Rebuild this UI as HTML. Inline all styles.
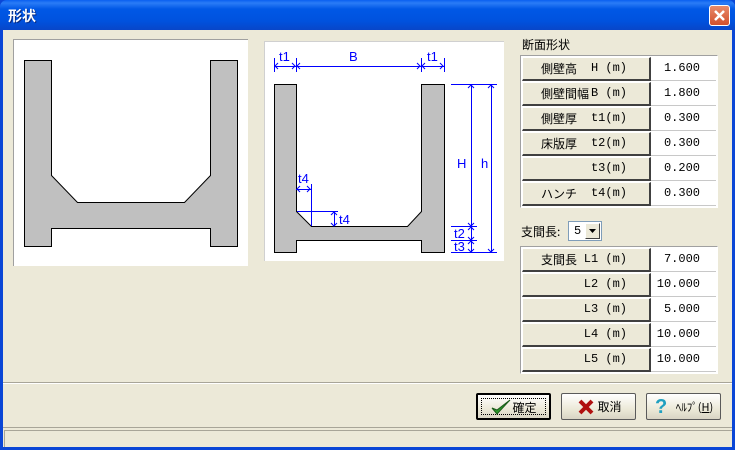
<!DOCTYPE html>
<html><head><meta charset="utf-8"><style>
*{margin:0;padding:0;box-sizing:border-box}
body{width:735px;height:450px;overflow:hidden;background:#0a46d6;font-family:"Liberation Mono","Noto Sans CJK JP",monospace;font-size:12px;color:#000;position:relative}
.abs{position:absolute}
#title{left:0;top:0;width:735px;height:30px;background:linear-gradient(#0a5ff0 0%,#2a7cf6 10%,#0058e6 30%,#0052de 70%,#0846c8 100%);border-radius:7px 7px 0 0}
#title span{position:absolute;left:8px;top:6px;color:#fff;font-weight:bold;font-size:14px;font-family:"Noto Sans CJK JP",sans-serif;text-shadow:1px 1px #0a2a80}
#close{left:709px;top:5px;width:21px;height:21px;background:linear-gradient(#e88a6a,#d2502c);border:1px solid #fff;border-radius:3px}
#body{left:3px;top:30px;width:729px;height:417px;background:#ece9d8}
.panel{background:#fff;border-top:1px solid #a0a0a0;border-left:1px solid #a0a0a0}
.cell{position:absolute;height:24px;line-height:21px;white-space:pre;overflow:hidden}
.lab{background:#ece9d8;border-top:1px solid #fff;border-left:1px solid #fff;border-right:2px solid #404040;border-bottom:2px solid #404040;font-size:12px}
.lab .a{position:absolute;left:18px;top:0;height:21px;line-height:21px;font-family:"Noto Sans CJK JP",sans-serif;font-size:12px}
.lab .b{position:absolute;right:22px;top:0;height:21px;line-height:21px;font-size:12px}
.val{background:#fff;text-align:right;padding-right:16px;border-bottom:1px solid #c8c8c8;font-size:12px;line-height:23px}
.tbl{background:#fff;border-top:1px solid #a0a0a0;border-left:1px solid #a0a0a0;border-right:1px solid #fff;border-bottom:1px solid #fff}
.btn{position:absolute;top:393px;height:27px;width:75px;background:linear-gradient(#fff,#ece9d8 60%,#d8d4c4);border:1px solid #5a5a5a;border-radius:2px;text-align:center;line-height:25px;font-family:"Noto Sans CJK JP",sans-serif;font-size:12px}
</style></head><body>
<div id="title" class="abs"><span>形状</span></div>
<div id="close" class="abs"><svg width="19" height="19"><path d="M5 5L14 14M14 5L5 14" stroke="#fff" stroke-width="2.5"/></svg></div>
<div id="body" class="abs"></div>

<div class="abs panel" style="left:13px;top:39px;width:235px;height:227px"></div>
<svg class="abs" style="left:0;top:0" width="735" height="450">
<path d="M24.5 60.5H51.5V175.5L77.5 202.5H184.5L210.5 175.5V60.5H237.5V246.5H210.5V228.5H51.5V246.5H24.5Z" fill="#c0c0c0" stroke="#000"/>
</svg>

<div class="abs panel" style="left:264px;top:41px;width:240px;height:220px;border-color:#d0d0d0"></div>
<svg class="abs" style="left:0;top:0" width="735" height="450" font-family="Liberation Sans,sans-serif" font-size="13" fill="#0000ff">
<path d="M274.5 84.5H296.5V211.5L311.5 226.5H407.5L421.5 211.5V84.5H444.5V252.5H421.5V240.5H296.5V252.5H274.5Z" fill="#c0c0c0" stroke="#000"/>
<g stroke="#0000ff" fill="none">
<path d="M274.5 58V72M296.5 58V72M421.5 58V72M444.5 58V72M274 66.5H444"/>
<path d="M451 84.5H497M451 226.5H477M451 240.5H477M451 252.5H497"/>
<path d="M471.5 84V252M491.5 84V252"/>
<path d="M296 189.5H311M311.5 184V226M297 211.5H338M334.5 211V226"/>
<path d="M278 63l-3 3 3 3M292 63l3 3-3 3M300 63l-3 3 3 3M417 63l3 3-3 3M425 63l-3 3 3 3M440 63l3 3-3 3"/>
<path d="M468 88l3-3 3 3M468 223l3 3 3-3M488 88l3-3 3 3M488 249l3 3 3-3M468 230l3-3 3 3M468 237l3 3 3-3M468 244l3-3 3 3M468 249l3 3 3-3"/>
<path d="M300 186l-3 3 3 3M307 186l3 3-3 3M331 215l3-3 3 3M331 223l3 3 3-3"/>
</g>
<text x="279" y="61">t1</text><text x="349" y="61">B</text><text x="427" y="61">t1</text>
<text x="457" y="168">H</text><text x="481" y="168">h</text>
<text x="454" y="238">t2</text><text x="454" y="251">t3</text>
<text x="298" y="183">t4</text><text x="339" y="224">t4</text>
</svg>

<div class="abs" style="left:522px;top:36px;font-family:'Noto Sans CJK JP',sans-serif">断面形状</div>
<div class="abs tbl" style="left:520px;top:55px;width:198px;height:153px"></div>
<div class="abs" style="left:522px;top:57px">
<div class="cell lab" style="left:0;top:0;width:129px"><span class="a">側壁高</span><span class="b">H (m)</span></div><div class="cell val" style="left:129px;top:0;width:65px">1.600</div>
<div class="cell lab" style="left:0;top:25px;width:129px"><span class="a">側壁間幅</span><span class="b">B (m)</span></div><div class="cell val" style="left:129px;top:25px;width:65px">1.800</div>
<div class="cell lab" style="left:0;top:50px;width:129px"><span class="a">側壁厚</span><span class="b">t1(m)</span></div><div class="cell val" style="left:129px;top:50px;width:65px">0.300</div>
<div class="cell lab" style="left:0;top:75px;width:129px"><span class="a">床版厚</span><span class="b">t2(m)</span></div><div class="cell val" style="left:129px;top:75px;width:65px">0.300</div>
<div class="cell lab" style="left:0;top:100px;width:129px"><span class="b">t3(m)</span></div><div class="cell val" style="left:129px;top:100px;width:65px">0.200</div>
<div class="cell lab" style="left:0;top:125px;width:129px"><span class="a">ハンチ</span><span class="b">t4(m)</span></div><div class="cell val" style="left:129px;top:125px;width:65px">0.300</div>
</div>

<div class="abs" style="left:521px;top:223px;font-family:'Noto Sans CJK JP',sans-serif">支間長:</div>
<div class="abs" style="left:568px;top:221px;width:34px;height:20px;background:#fff;border:1px solid #7f9db9"><span style="position:absolute;left:5px;top:2px">5</span><div style="position:absolute;right:1px;top:1px;width:15px;height:16px;background:#ece9d8;border:1px solid #fff;border-right-color:#404040;border-bottom-color:#404040"><svg width="13" height="14"><path d="M3 5h7l-3.5 4z" fill="#000"/></svg></div></div>
<div class="abs tbl" style="left:520px;top:246px;width:198px;height:128px"></div>
<div class="abs" style="left:522px;top:248px">
<div class="cell lab" style="left:0;top:0;width:129px"><span class="a">支間長</span><span class="b">L1 (m)</span></div><div class="cell val" style="left:129px;top:0;width:65px">7.000</div>
<div class="cell lab" style="left:0;top:25px;width:129px"><span class="b">L2 (m)</span></div><div class="cell val" style="left:129px;top:25px;width:65px">10.000</div>
<div class="cell lab" style="left:0;top:50px;width:129px"><span class="b">L3 (m)</span></div><div class="cell val" style="left:129px;top:50px;width:65px">5.000</div>
<div class="cell lab" style="left:0;top:75px;width:129px"><span class="b">L4 (m)</span></div><div class="cell val" style="left:129px;top:75px;width:65px">10.000</div>
<div class="cell lab" style="left:0;top:100px;width:129px"><span class="b">L5 (m)</span></div><div class="cell val" style="left:129px;top:100px;width:65px">10.000</div>
</div>

<div class="abs" style="left:3px;top:382px;width:729px;height:1px;background:#a8a598"></div>
<div class="abs" style="left:3px;top:383px;width:729px;height:1px;background:#fff"></div>

<div class="btn" style="left:476px;border:2px solid #000"><div style="position:absolute;left:3px;top:3px;right:3px;bottom:3px;border:1px dotted #000"></div><svg style="position:absolute;left:12px;top:3px" width="22" height="18"><path d="M2 10l5 6L20 2l-13 10z" fill="#2a9a2a" stroke="#1a5a1a"/></svg><span style="margin-left:22px">確定</span></div>
<div class="btn" style="left:561px"><svg style="position:absolute;left:16px;top:5px" width="16" height="16"><path d="M2 2L14 14M14 2L2 14" stroke="#b01010" stroke-width="4"/></svg><span style="margin-left:22px">取消</span></div>
<div class="btn" style="left:646px"><span style="position:absolute;left:8px;top:0;font:bold 20px 'Liberation Sans',sans-serif;color:#20a0c0;line-height:26px">?</span><span style="margin-left:22px;font-size:11px">ﾍﾙﾌﾟ(<u>H</u>)</span></div>

<div class="abs" style="left:3px;top:427px;width:729px;height:1px;background:#a8a598"></div>
<div class="abs" style="left:4px;top:430px;width:728px;height:17px;border-top:1px solid #a8a598;border-left:1px solid #a8a598"></div>
</body></html>
